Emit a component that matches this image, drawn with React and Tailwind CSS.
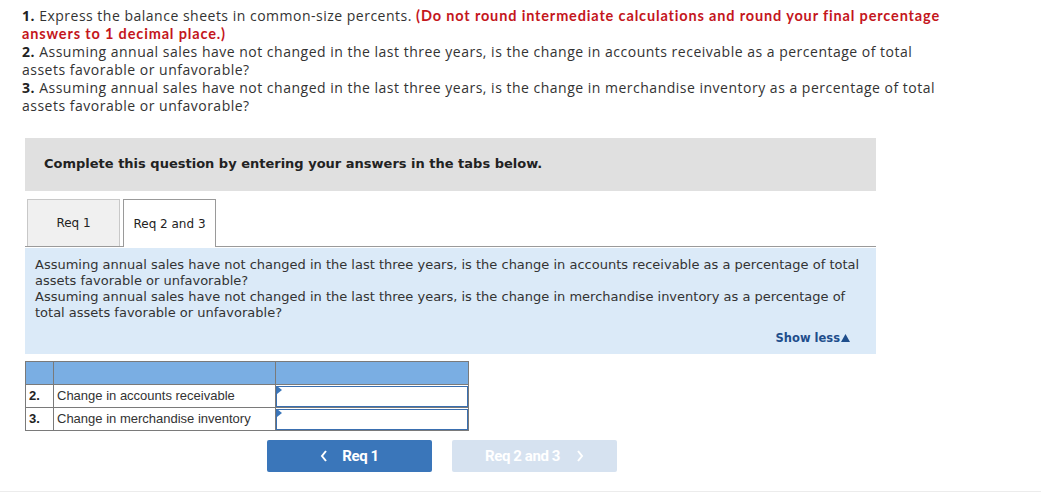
import React from "react";

const rows = [
  { num: "2.", label: "Change in accounts receivable" },
  { num: "3.", label: "Change in merchandise inventory" },
];

export default function App() {
  return (
    <div className="w-[1041px] h-[494px] bg-white overflow-hidden relative">
      {/* instructions */}
      <div className="pl-[22px] pt-[7px] w-[950px] font-['Open_Sans',sans-serif] text-[14px] leading-[18px] tracking-[0.5px] text-[#333]">
        <p>
          <b className="text-[#222]">1.</b> Express the balance sheets in common-size percents.{" "}
          <b className="text-[#c4161c] font-['Lato',sans-serif] text-[14.5px] tracking-[0.85px]">
            (Do not round intermediate calculations and round your final percentage answers to 1 decimal place.)
          </b>
        </p>
        <p>
          <b className="text-[#222]">2.</b> Assuming annual sales have not changed in the last three years, is the change in accounts receivable as a percentage of total assets favorable or unfavorable?
        </p>
        <p>
          <b className="text-[#222]">3.</b> Assuming annual sales have not changed in the last three years, is the change in merchandise inventory as a percentage of total assets favorable or unfavorable?
        </p>
      </div>

      <div className="ml-[25px] w-[851px] mt-[23px]">
        <div className="h-[53px] bg-[#e0e0e0] flex items-center pl-[19px] pb-[1px] font-['DejaVu_Sans','Verdana',sans-serif] text-[13px] font-bold text-[#222]">
          Complete this question by entering your answers in the tabs below.
        </div>

        {/* tabs */}
        <div className="mt-[8px] flex items-end gap-[3px] pl-[2px] border-b border-[#9a9a9a] h-[48px] font-['DejaVu_Sans','Verdana',sans-serif] text-[12px] text-[#222]">
          <div className="w-[93px] h-[47px] bg-[#f0f0f0] border border-b-0 border-[#c8c8c8] flex items-center justify-center">
            Req 1
          </div>
          <div className="w-[93px] h-[48px] -mb-px bg-white border border-b-0 border-[#9a9a9a] flex items-center justify-center">
            Req 2 and 3
          </div>
        </div>

        {/* question box */}
        <div className="mt-px bg-[#dbeaf8] h-[106px] pt-[9px] pl-[10px] pr-[10px] font-['DejaVu_Sans','Verdana',sans-serif] text-[13px] leading-[16px] text-[#333] flex flex-col">
          <p>
            Assuming annual sales have not changed in the last three years, is the change in accounts receivable as a percentage of total assets favorable or unfavorable?
          </p>
          <p>
            Assuming annual sales have not changed in the last three years, is the change in merchandise inventory as a percentage of total assets favorable or unfavorable?
          </p>
          <div className="mt-auto mb-[8px] self-end pr-[16px] flex items-center gap-[1px] text-[11.5px] font-bold text-[#1f4e8c]">
            Show less
            <svg width="9" height="8" viewBox="0 0 9 8">
              <path d="M4.5 0 L9 8 L0 8 Z" fill="#1f4e8c" />
            </svg>
          </div>
        </div>

        {/* table */}
        <table className="mt-[7px] border-collapse font-['Liberation_Sans','Arial',sans-serif] text-[13px] text-[#333]">
          <thead>
            <tr className="h-[23px] bg-[#7aaee3]">
              <th className="w-[28px] border border-[#7a7a7a]"></th>
              <th className="w-[222px] border border-[#7a7a7a]"></th>
              <th className="w-[193px] border border-[#7a7a7a]"></th>
            </tr>
          </thead>
          <tbody>
            {rows.map((r) => (
              <tr key={r.num} className="h-[23px]">
                <td className="border border-[#7a7a7a] pl-[3px] font-bold text-[#222]">{r.num}</td>
                <td className="border border-[#7a7a7a] pl-[3px]">{r.label}</td>
                <td className="border border-[#7a7a7a] p-0 relative">
                  <div className="h-[21px] border border-[#3a6fb0] bg-white"></div>
                  <span className="absolute left-[1px] top-[1px] w-0 h-0 border-t-[4px] border-b-[4px] border-l-[5px] border-t-transparent border-b-transparent border-l-[#3a76ba]"></span>
                </td>
              </tr>
            ))}
          </tbody>
        </table>

        {/* nav buttons */}
        <div className="mt-[9px] ml-[242px] flex gap-[20px] font-['Roboto','Liberation_Sans',sans-serif] text-[15px] font-bold tracking-[-0.4px]">
          <button className="w-[165px] h-[32px] rounded-[2px] bg-[#3a76ba] text-white flex items-center justify-center gap-[14px]">
            <svg width="8" height="12" viewBox="0 0 8 12" fill="none" stroke="white" strokeWidth="2">
              <path d="M6 1 L2 6 L6 11" />
            </svg>
            Req 1
          </button>
          <button className="w-[165px] h-[32px] rounded-[2px] bg-[#d6e2f0] text-white flex items-center justify-center gap-[16px]">
            Req 2 and 3
            <svg width="8" height="12" viewBox="0 0 8 12" fill="none" stroke="white" strokeWidth="2">
              <path d="M2 1 L6 6 L2 11" />
            </svg>
          </button>
        </div>
      </div>

      <div className="absolute left-0 right-0 top-[491px] border-t border-[#ececec]"></div>
    </div>
  );
}
